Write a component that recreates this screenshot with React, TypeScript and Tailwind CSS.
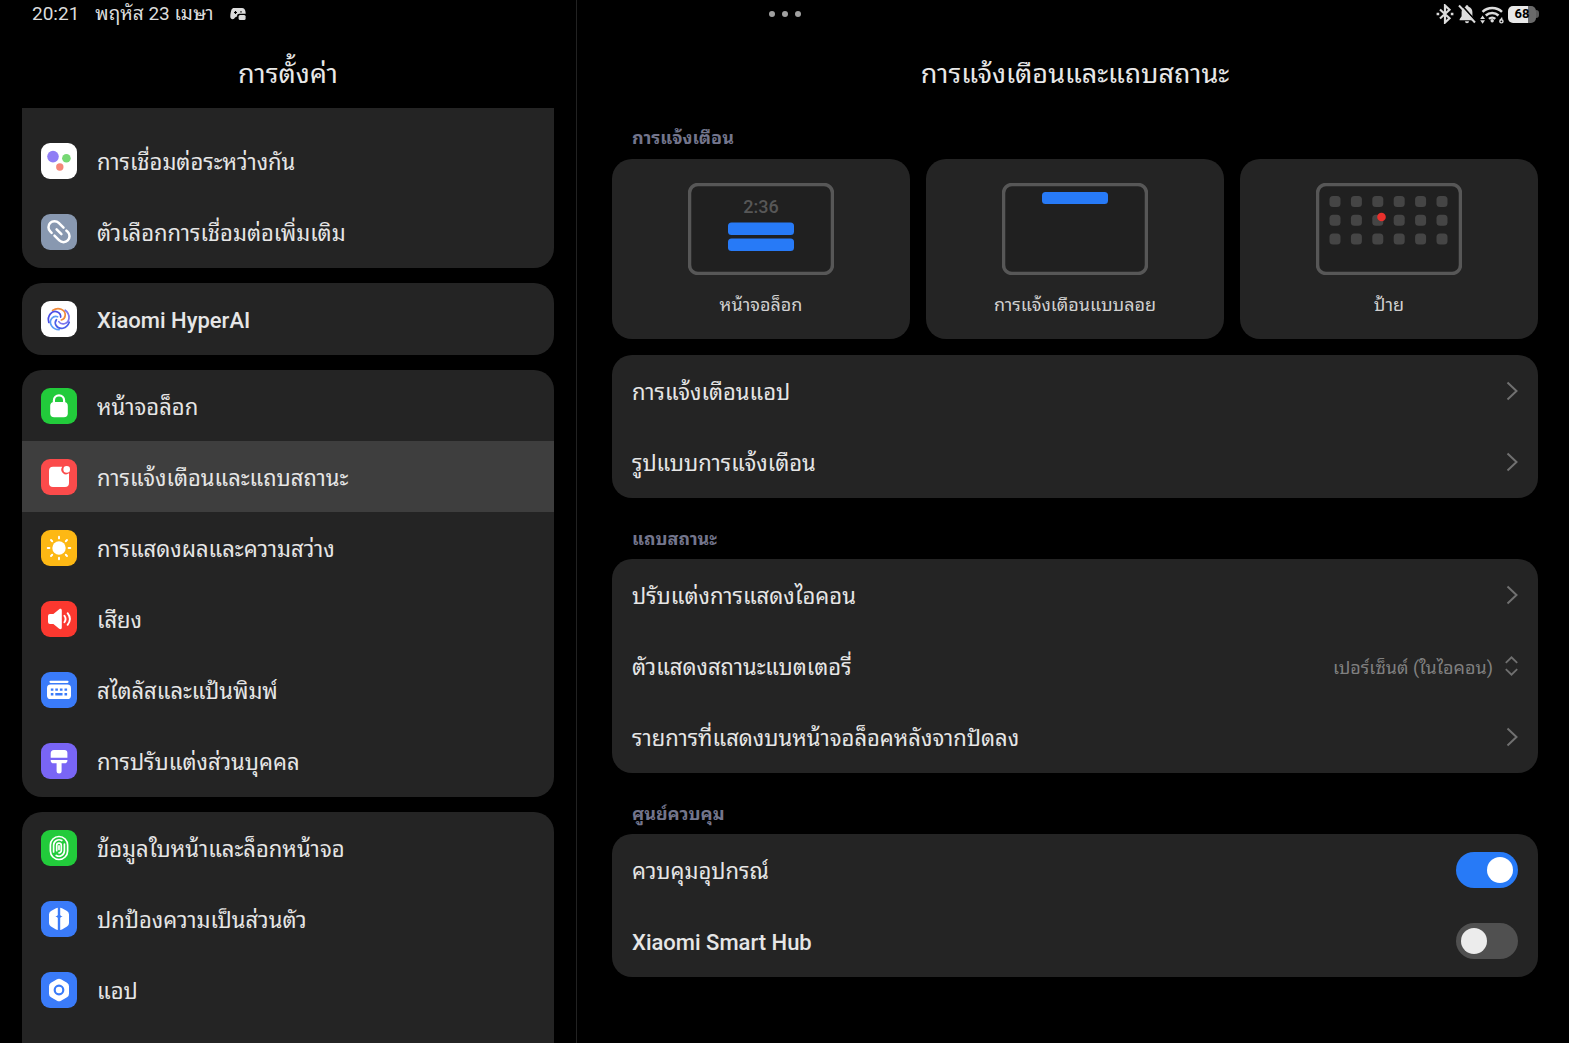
import React from 'react';

const BLUE = '#277af7';

/* Each glyph is drawn on a 36 x 36 tile */
const ConnectGlyph = () => (
  <>
    <circle cx="12" cy="13.6" r="5.8" fill="#8f7df5" />
    <circle cx="25.4" cy="15.3" r="4.3" fill="#76d873" />
    <circle cx="18.8" cy="24" r="3.7" fill="#f58678" />
  </>
);

const LinkGlyph = () => (
  <g transform="translate(18 17.7) rotate(45)" fill="none" stroke="#fff" strokeWidth="2.5" strokeLinecap="round">
    <path d="M0.4 -6H-6.4a6 6 0 0 0 0 12H-4.4" />
    <path d="M-0.4 6H6.4a6 6 0 0 0 0 -12H4.4" />
    <path d="M-3.4 0H3.4" />
  </g>
);

const swirl = ['#f08a3c', '#7f78ee', '#4a5fe8', '#5c9cf5', '#4a4fe6'];

const HyperGlyph = () => (
  <g transform="translate(18 18)" fill="none" strokeWidth="1.7" strokeLinecap="round">
    {swirl.map((color, i) => (
      <path key={color} d="M-6.4 -8.6C-0.6 -12.6 6.6 -9.4 6.2 -3.6C6 -1.4 4.6 0.4 2.4 1" stroke={color} transform={`rotate(${i * 72})`} />
    ))}
  </g>
);

const LockGlyph = () => (
  <>
    <path d="M12.9 16v-3.6a5.1 5.1 0 0 1 10.2 0V16" fill="none" stroke="#fff" strokeWidth="2.2" />
    <rect x="9.2" y="14" width="17.6" height="15.2" rx="4" fill="#fff" />
  </>
);

const NoticeGlyph = () => (
  <>
    <path d="M12 7.7h9.2a4.8 4.8 0 0 0 6.8 6.6V24a4 4 0 0 1-4 4H12a4 4 0 0 1-4-4V11.7a4 4 0 0 1 4-4Z" fill="#fff" />
    <circle cx="25.7" cy="10.4" r="3.3" fill="#fff" />
  </>
);

const SunGlyph = () => (
  <g transform="translate(18 18)">
    <circle r="6.7" fill="#fff" />
    {[0, 45, 90, 135, 180, 225, 270, 315].map((deg) => (
      <path key={deg} d="M0 -11.3V-9.6" stroke="#fff" strokeWidth="1.9" strokeLinecap="round" transform={`rotate(${deg})`} />
    ))}
  </g>
);

const SoundGlyph = () => (
  <>
    <path d="M9 13h3.4l5.8-4.7c1.3-1 2.6-.4 2.6 1.2v17c0 1.6-1.3 2.2-2.6 1.2L12.4 23H9a2 2 0 0 1-2-2v-6a2 2 0 0 1 2-2Z" fill="#fff" />
    <path d="M23.4 14.8c1.4 1.9 1.4 4.5 0 6.4M26.6 12.2c2.8 3.5 2.8 8.1 0 11.6" fill="none" stroke="#fff" strokeWidth="1.9" strokeLinecap="round" />
  </>
);

const KeyboardGlyph = () => (
  <>
    <path d="M9.5 9.8h17" stroke="#fff" strokeWidth="2.2" strokeLinecap="round" />
    <rect x="6" y="12.6" width="24" height="14.4" rx="3.6" fill="#fff" />
    <path d="M9.8 17.6h2.6M14.3 17.6h2.6M18.9 17.6h2.6M23.5 17.6h2.6M9.8 22.3h2.6M14.3 22.3h7.2M23.5 22.3h2.6" stroke="#3a7bf9" strokeWidth="2.4" />
  </>
);

const BrushGlyph = () => (
  <>
    <path d="M13 7h10.4a3 3 0 0 1 3 3v4.8H9.7V10.4A3.4 3.4 0 0 1 13 7Z" fill="#fff" />
    <path d="M9.7 17h16.7v.6c0 1.7-1 2.7-2.7 2.7h-3.1v7.8a2.5 2.5 0 0 1-5 0v-7.8h-3.2c-1.7 0-2.7-1-2.7-2.7Z" fill="#fff" />
  </>
);

const FingerGlyph = () => (
  <g fill="none" stroke="#fff" strokeWidth="1.7" strokeLinecap="round">
    <rect x="9.4" y="6.5" width="17.2" height="23" rx="8.6" />
    <path d="M12.6 22V15.2a5.4 5.4 0 0 1 8.2-4.6M23.4 14v6.8a5.4 5.4 0 0 1-8.2 4.6" />
    <path d="M15.7 20.7v-5.2a2.3 2.3 0 0 1 4.6 0v5a2.3 2.3 0 0 1-2.3 2.3M18 15.8v3.6" />
  </g>
);

const PrivacyGlyph = () => (
  <>
    <path d="M16.8 6.7v22.2c-.6 0-1.2-.2-1.8-.5l-5-2.9A4 4 0 0 1 8 22v-8.4a4 4 0 0 1 2-3.5l5-2.9c.6-.3 1.2-.5 1.8-.5ZM19.2 6.7v22.2c.6 0 1.2-.2 1.8-.5l5-2.9a4 4 0 0 0 2-3.5v-8.4a4 4 0 0 0-2-3.5l-5-2.9c-.6-.3-1.2-.5-1.8-.5Z" fill="#fff" />
    <path d="M18 11.8c.5 2.2 1.4 3.1 3.6 3.6c-2.2.5-3.1 1.4-3.6 3.6c-.5-2.2-1.4-3.1-3.6-3.6c2.2-.5 3.1-1.4 3.6-3.6Z" fill="#3a7bf9" />
  </>
);

const AppsGlyph = () => (
  <>
    <path d="M16 7.3a4 4 0 0 1 4 0l6 3.4a4 4 0 0 1 2 3.5v7.6a4 4 0 0 1-2 3.5l-6 3.4a4 4 0 0 1-4 0l-6-3.4a4 4 0 0 1-2-3.5v-7.6a4 4 0 0 1 2-3.5Z" fill="#fff" />
    <circle cx="18" cy="18" r="4.3" fill="none" stroke="#3a7bf9" strokeWidth="2.2" />
  </>
);

interface MenuItem {
  label: string;
  tile: string;
  Glyph: React.FC;
  active?: boolean;
}

const menuGroups: MenuItem[][] = [
  [
    { label: 'การเชื่อมต่อระหว่างกัน', tile: 'bg-white', Glyph: ConnectGlyph },
    { label: 'ตัวเลือกการเชื่อมต่อเพิ่มเติม', tile: 'bg-[#8898b0]', Glyph: LinkGlyph },
  ],
  [{ label: 'Xiaomi HyperAI', tile: 'bg-white', Glyph: HyperGlyph }],
  [
    { label: 'หน้าจอล็อก', tile: 'bg-[#22cb3b]', Glyph: LockGlyph },
    { label: 'การแจ้งเตือนและแถบสถานะ', tile: 'bg-[#fb4b4b]', Glyph: NoticeGlyph, active: true },
    { label: 'การแสดงผลและความสว่าง', tile: 'bg-[#fdb814]', Glyph: SunGlyph },
    { label: 'เสียง', tile: 'bg-[#fb382f]', Glyph: SoundGlyph },
    { label: 'สไตลัสและแป้นพิมพ์', tile: 'bg-[#3a7bf9]', Glyph: KeyboardGlyph },
    { label: 'การปรับแต่งส่วนบุคคล', tile: 'bg-[#7965f5]', Glyph: BrushGlyph },
  ],
  [
    { label: 'ข้อมูลใบหน้าและล็อกหน้าจอ', tile: 'bg-[#22cb3b]', Glyph: FingerGlyph },
    { label: 'ปกป้องความเป็นส่วนตัว', tile: 'bg-[#3a7bf9]', Glyph: PrivacyGlyph },
    { label: 'แอป', tile: 'bg-[#3a7bf9]', Glyph: AppsGlyph },
  ],
];

// Latin product names are set a little heavier than the Thai labels
const labelClass = (label: string) =>
  /^[A-Z]/.test(label) ? 'pt-1 text-[22px] font-medium leading-8' : 'pt-1 text-[22px] leading-8';

const StatusBar: React.FC = () => (
  <div className="absolute inset-x-0 top-0 grid h-7 grid-cols-3 items-center pl-8 pr-[30px] text-[#dcdcdc]">
    <div className="flex items-center gap-4 text-[19px] leading-7">
      <span>20:21</span>
      <span>พฤหัส 23 เมษา</span>
      <svg width="16" height="14" viewBox="0 0 16 14" fill="currentColor">
        <path d="M4 1h8c2 0 3.2 1.6 3.5 3.8l.2 2H9.3c-1.3 0-2.2.8-2.2 2v.7c-1.5.2-2 .9-2.8 2C3.5 12.6.3 12.8.3 9.6C.3 7 1 4 1.6 2.6C2 1.6 2.9 1 4 1Z" />
        <rect x="8.6" y="8" width="7" height="5" rx="1.5" />
        <path d="M4 5.500h3M5.500 4v3M10.300 4.800h1.400" stroke="#000" strokeWidth="1.2" />
      </svg>
    </div>
    <div className="flex justify-center gap-[7px]">
      <span className="size-[6px] rounded-full bg-[#a0a0a0]" />
      <span className="size-[6px] rounded-full bg-[#a0a0a0]" />
      <span className="size-[6px] rounded-full bg-[#a0a0a0]" />
    </div>
    <div className="flex items-center justify-end gap-1">
      <svg width="18" height="20" viewBox="0 0 18 20" fill="none" stroke="currentColor" strokeWidth="2.2">
        <path d="M4 5.5l9.5 8.7L9 18.5V1.5l4.5 4.3L4 14.5" />
        <path d="M.6 10h2.600M14.800 10h2.600" strokeWidth="2.4" />
      </svg>
      <svg width="18" height="20" viewBox="0 0 18 20">
        <path d="M9 1.3c.9 0 1.5.6 1.5 1.4c2.5.7 3.9 2.7 3.9 5.3v4.3l2 2.9v1H1.600v-1l2-2.900V8c0-2.600 1.400-4.600 3.900-5.300c0-.8.6-1.400 1.500-1.400ZM7 17.200h4a2 2 0 0 1-4 0Z" fill="currentColor" />
        <path d="M3.5 1l15 17" stroke="#000" strokeWidth="1.8" />
        <path d="M1 1.5l16 17" stroke="currentColor" strokeWidth="2" />
      </svg>
      <svg width="24" height="20" viewBox="0 0 24 20" fill="none" stroke="currentColor" strokeWidth="2.5">
        <path d="M2.5 7.8a14.3 14.3 0 0 1 19.5 0M5.8 11.5a9.4 9.4 0 0 1 12.7 0M9 14.9a4.7 4.7 0 0 1 6.3 0" />
        <circle cx="12.2" cy="16.8" r="1.7" fill="currentColor" stroke="none" />
        <path d="M2.6 11.5l2.4 3.5H.2ZM2.6 19.8l2.4-3.5H.2Z" fill="currentColor" stroke="none" />
        <path d="M22.2 13.6l-2 2.8" strokeWidth="1.4" />
        <circle cx="21.4" cy="17.3" r="1.6" strokeWidth="1.4" />
      </svg>
      <div className="flex items-center">
        <span className="flex h-[17px] w-7 items-center justify-center rounded-[5px] bg-linear-to-r from-[#e8e8e8] from-70% to-[#6a6a6a] to-70% text-[13px] font-bold leading-4 text-black">
          68
        </span>
        <span className="h-2 w-[3px] rounded-r-full bg-[#5a5a5a]" />
      </div>
    </div>
  </div>
);

const Sidebar: React.FC = () => (
  <aside className="flex w-[577px] max-w-2/5 shrink-0 flex-col overflow-hidden border-r border-[#222] px-[22px]">
    <h1 className="pt-14 pb-4 text-center text-[27px] leading-9 text-[#e8e8e8]">การตั้งค่า</h1>
    <nav className="flex flex-col gap-[15px]">
      {menuGroups.map((group, i) => (
        <div
          key={i}
          className="overflow-hidden rounded-[20px] bg-[#242424] pb-px first:rounded-t-none first:pt-[17px] last:pb-20"
        >
          {group.map(({ label, tile, Glyph, active }) => (
            <a key={label} href="#" className={`flex h-[71px] items-center gap-5 px-[19px] ${active ? 'bg-[#3e3e3e]' : ''}`}>
              <span className={`size-9 shrink-0 rounded-[9px] ${tile}`}>
                <svg className="size-9" viewBox="0 0 36 36">
                  <Glyph />
                </svg>
              </span>
              <span className={labelClass(label)}>{label}</span>
            </a>
          ))}
        </div>
      ))}
    </nav>
  </aside>
);

const LockPreview = () => (
  <svg width="146" height="92" viewBox="0 0 146 92">
    <rect x="1.5" y="1.5" width="143" height="89" rx="8.5" fill="#202020" stroke="#575757" strokeWidth="3.5" />
    <text x="73" y="30" textAnchor="middle" fontSize="18" fontFamily="Roboto" fontWeight="500" fill="#575757">2:36</text>
    <rect x="40" y="39.5" width="66" height="12.5" rx="3.5" fill={BLUE} />
    <rect x="40" y="55.5" width="66" height="12.5" rx="3.5" fill={BLUE} />
  </svg>
);

const FloatingPreview = () => (
  <svg width="146" height="92" viewBox="0 0 146 92">
    <rect x="1.5" y="1.5" width="143" height="89" rx="8.5" fill="#202020" stroke="#575757" strokeWidth="3.5" />
    <rect x="40" y="9" width="66" height="12" rx="3.5" fill={BLUE} />
  </svg>
);

const BadgePreview = () => (
  <svg width="146" height="92" viewBox="0 0 146 92">
    <rect x="1.5" y="1.5" width="143" height="89" rx="8.5" fill="#202020" stroke="#575757" strokeWidth="3.5" />
    {[0, 1, 2].map((row) =>
      [0, 1, 2, 3, 4, 5].map((col) => (
        <rect key={`${row}-${col}`} x={13.5 + col * 21.4} y={13 + row * 18.7} width="11" height="11" rx="3.5" fill="#454545" />
      ))
    )}
    <circle cx="65.5" cy="34" r="4.3" fill="#e9302c" />
  </svg>
);

const styleCards = [
  { label: 'หน้าจอล็อก', Preview: LockPreview },
  { label: 'การแจ้งเตือนแบบลอย', Preview: FloatingPreview },
  { label: 'ป้าย', Preview: BadgePreview },
];

const SectionTitle: React.FC<{ children: React.ReactNode }> = ({ children }) => (
  <h3 className="px-5 text-[18px] font-bold leading-7 text-[#73758c]">{children}</h3>
);

const Card: React.FC<{ children: React.ReactNode }> = ({ children }) => (
  <div className="overflow-hidden rounded-[20px] bg-[#242424] pb-px">{children}</div>
);

const rowClass = 'flex h-[71px] items-center justify-between px-5';

const LinkRow: React.FC<{ label: string }> = ({ label }) => (
  <a href="#" className={rowClass}>
    <span className={labelClass(label)}>{label}</span>
    <svg width="12" height="20" viewBox="0 0 12 20" fill="none" stroke="#707070" strokeWidth="2">
      <path d="M1.5 1.5L10.5 10L1.5 18.5" />
    </svg>
  </a>
);

const ToggleRow: React.FC<{ id: string; label: string; checked?: boolean }> = ({ id, label, checked }) => (
  <div className={rowClass}>
    <label htmlFor={id} className={labelClass(label)}>{label}</label>
    <input
      id={id}
      type="checkbox"
      role="switch"
      defaultChecked={checked}
      className="h-9 w-[62px] appearance-none rounded-full bg-[#505050] px-[5px] py-[5px] before:block before:size-[26px] before:rounded-full before:bg-[#ececec] checked:bg-[#277af7] checked:before:ml-auto checked:before:bg-white"
    />
  </div>
);

const App: React.FC = () => (
  <div className="relative flex h-screen overflow-hidden bg-black font-['Roboto','Noto_Sans_Thai_Looped','Noto_Looped_Thai','Loma','Noto_Sans_Thai','Noto_Sans',sans-serif] text-[#e6e6e6]">
    <Sidebar />
    <main className="min-w-0 flex-1 pl-[35px] pr-[31px]">
      <h2 className="pt-14 pb-8 text-center text-[27px] leading-9 text-[#e8e8e8]">การแจ้งเตือนและแถบสถานะ</h2>

      <SectionTitle>การแจ้งเตือน</SectionTitle>
      <div className="mt-[7px] grid grid-cols-3 gap-4">
        {styleCards.map(({ label, Preview }) => (
          <button key={label} type="button" className="flex h-[180px] flex-col items-center gap-3.5 rounded-[20px] bg-[#242424] pt-6">
            <Preview />
            <span className="text-[18px] leading-8 text-[#d0d0d0]">{label}</span>
          </button>
        ))}
      </div>

      <div className="mt-4">
        <Card>
          <LinkRow label="การแจ้งเตือนแอป" />
          <LinkRow label="รูปแบบการแจ้งเตือน" />
        </Card>
      </div>

      <div className="mt-[27px] flex flex-col gap-1.5">
        <SectionTitle>แถบสถานะ</SectionTitle>
        <Card>
          <LinkRow label="ปรับแต่งการแสดงไอคอน" />
          <div className={rowClass}>
            <label htmlFor="battery" className={labelClass('ตัวแสดงสถานะแบตเตอรี่')}>ตัวแสดงสถานะแบตเตอรี่</label>
            <div className="flex items-center gap-3">
              <select id="battery" className="field-sizing-content h-10 appearance-none bg-transparent pt-1 text-right text-[18px] text-[#808080]">
                <option>เปอร์เซ็นต์ (ในไอคอน)</option>
              </select>
              <svg width="13" height="20" viewBox="0 0 13 20" fill="none" stroke="#707070" strokeWidth="1.8">
                <path d="M.8 6.8L6.5 1.3L12.2 6.8M.8 13.2L6.5 18.7L12.2 13.2" />
              </svg>
            </div>
          </div>
          <LinkRow label="รายการที่แสดงบนหน้าจอล็อคหลังจากปัดลง" />
        </Card>
      </div>

      <div className="mt-[27px] flex flex-col gap-1.5">
        <SectionTitle>ศูนย์ควบคุม</SectionTitle>
        <Card>
          <ToggleRow id="devices" label="ควบคุมอุปกรณ์" checked />
          <ToggleRow id="hub" label="Xiaomi Smart Hub" />
        </Card>
      </div>
    </main>
    <StatusBar />
  </div>
);

export default App;
